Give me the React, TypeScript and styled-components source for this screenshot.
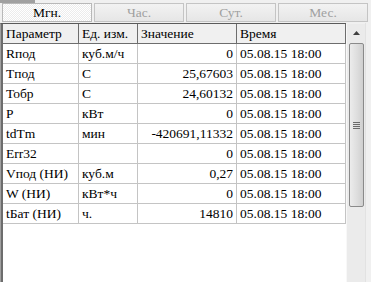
import React from "react";
import styled, { createGlobalStyle } from "styled-components";

const Global = createGlobalStyle`
  html, body { margin: 0; padding: 0; background: #f0f0f0; }
`;

const Page = styled.div`
  width: 371px;
  height: 282px;
  display: flex;
  flex-direction: column;
  background: #f0f0f0;
  overflow: hidden;
  position: relative;
  font-family: "Liberation Serif", "Times New Roman", serif;
  font-size: 13.5px;
  color: #000;
`;

const TopEdge = styled.div`
  position: absolute;
  left: 0;
  top: 0;
  width: 35px;
  height: 3px;
  background: #a0a0a0;
`;

const TabBar = styled.div`
  display: flex;
  gap: 2px;
  padding: 3px 3px 1px 2px;
  height: 19px;
`;

const Tab = styled.div<{ $active?: boolean }>`
  flex: 1;
  display: flex;
  align-items: center;
  justify-content: center;
  box-sizing: border-box;
  height: 19px;
  padding-top: 1px;
  border: 1px solid ${(p) => (p.$active ? "#b8b8b8" : "#c4c4c4")};
  color: ${(p) => (p.$active ? "#000" : "#a0a0a0")};
  background: ${(p) =>
    p.$active
      ? "repeating-conic-gradient(#ffffff 0 25%, #ececec 0 50%) 0 0 / 2px 2px"
      : "linear-gradient(#f2f2f2, #e6e6e6)"};
  line-height: 1;
`;

const Body = styled.div`
  flex: 1;
  display: flex;
  min-height: 0;
`;

const GridBox = styled.div`
  width: 343px;
  border-left: 1px solid #a0a0a0;
  box-shadow: inset 2px 0 0 #6d6d6d;
  padding-left: 2px;
  background: #fff;
  border-top: 1px solid #5a5a5a;
  display: flex;
  flex-direction: column;
`;

const Table = styled.div`
  display: grid;
  grid-template-columns: 76px 59px 99px 109px;
  grid-auto-rows: 20px;
`;

const HeadCell = styled.div`
  box-sizing: border-box;
  background: #f0f0f0;
  border-right: 1px solid #6d6d6d;
  border-bottom: 1px solid #6d6d6d;
  padding: 0 3px;
  line-height: 19px;
  white-space: nowrap;
  overflow: hidden;
`;

const Cell = styled.div<{ $right?: boolean }>`
  box-sizing: border-box;
  border-right: 1px solid #c4c4c4;
  border-bottom: 1px solid #c4c4c4;
  padding: 0 3px;
  line-height: 19px;
  white-space: nowrap;
  overflow: hidden;
  text-align: ${(p) => (p.$right ? "right" : "left")};
`;

const ScrollBar = styled.div`
  width: 18px;
  margin-top: 1px;
  background: #ebebeb;
  border-left: 1px solid #f8f8f8;
  display: flex;
  flex-direction: column;
  align-items: center;
`;

const Arrow = styled.div`
  height: 17px;
  width: 17px;
  display: flex;
  align-items: center;
  justify-content: center;
`;

const Thumb = styled.div`
  margin-top: 2px;
  width: 15px;
  height: 164px;
  box-sizing: border-box;
  border: 1px solid #8a8a8a;
  border-radius: 2px;
  background: linear-gradient(90deg, #ececec, #dcdcdc 60%, #cfcfcf);
  display: flex;
  align-items: center;
  justify-content: center;
`;

const Grip = styled.div`
  width: 7px;
  height: 7px;
  background: repeating-linear-gradient(#6a6a6a 0 1px, transparent 1px 2px);
`;

const RightStrip = styled.div`
  flex: 1;
  background: #f0f0f0;
  border-left: 1px solid #e2e2e2;
`;

const rows: [string, string, string, string][] = [
  ["Rпод", "куб.м/ч", "0", "05.08.15 18:00"],
  ["Tпод", "С", "25,67603", "05.08.15 18:00"],
  ["Тобр", "С", "24,60132", "05.08.15 18:00"],
  ["P", "кВт", "0", "05.08.15 18:00"],
  ["tdTm", "мин", "-420691,11332", "05.08.15 18:00"],
  ["Err32", "", "0", "05.08.15 18:00"],
  ["Vпод (НИ)", "куб.м", "0,27", "05.08.15 18:00"],
  ["W (НИ)", "кВт*ч", "0", "05.08.15 18:00"],
  ["tБат (НИ)", "ч.", "14810", "05.08.15 18:00"],
];

export default function App() {
  return (
    <Page>
      <Global />
      <TopEdge />
      <TabBar>
        <Tab $active>Мгн.</Tab>
        <Tab>Час.</Tab>
        <Tab>Сут.</Tab>
        <Tab>Мес.</Tab>
      </TabBar>
      <Body>
        <GridBox>
          <Table>
            <HeadCell>Параметр</HeadCell>
            <HeadCell>Ед. изм.</HeadCell>
            <HeadCell>Значение</HeadCell>
            <HeadCell>Время</HeadCell>
            {rows.map((r, i) => (
              <React.Fragment key={i}>
                <Cell>{r[0]}</Cell>
                <Cell>{r[1]}</Cell>
                <Cell $right>{r[2]}</Cell>
                <Cell>{r[3]}</Cell>
              </React.Fragment>
            ))}
          </Table>
        </GridBox>
        <ScrollBar>
          <Arrow>
            <svg width="7" height="4" viewBox="0 0 7 4">
              <path d="M3.5 0 L7 4 L0 4 Z" fill="#404040" />
            </svg>
          </Arrow>
          <Thumb>
            <Grip />
          </Thumb>
        </ScrollBar>
        <RightStrip />
      </Body>
    </Page>
  );
}
